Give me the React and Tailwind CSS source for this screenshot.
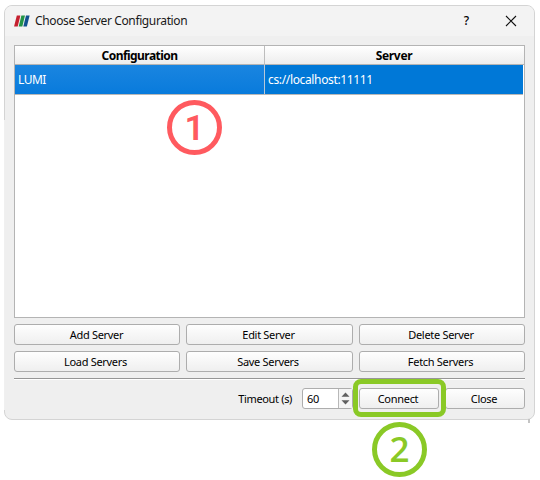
const BUTTON =
  "flex h-[21px] items-center justify-center rounded-[3px] border border-[#adadad] bg-linear-to-b from-[#fefefe] to-[#efefef] text-[11px] leading-none tracking-[-0.3px] text-black";

function Button({ children, className = "" }) {
  return <button className={`${BUTTON} ${className}`}>{children}</button>;
}

function Logo() {
  return (
    <svg className="h-[12px] w-[16px]" viewBox="0 0 16 12">
      <path d="M2.8 0.5h3.6L3.7 11.5H0.1z" fill="#c5202f" />
      <path d="M7.4 0.5h3.6L8.3 11.5H4.7z" fill="#239447" />
      <path d="M12 0.5h3.6L12.9 11.5H9.3z" fill="#12518f" />
    </svg>
  );
}

function TitleBar() {
  return (
    <header className="flex h-[30px] shrink-0 items-center bg-[#f3f3f3] pl-[9px] pr-[17px]">
      <Logo />
      <h1 className="ml-[5px] text-[12px] leading-none whitespace-nowrap tracking-[-0.37px] text-[#191919]">
        Choose Server Configuration
      </h1>
      <span className="ml-auto mr-[36px] text-[12px] leading-none font-medium text-black">?</span>
      <svg className="h-[12px] w-[12px]" viewBox="0 0 12 12" fill="none" stroke="#111" strokeWidth="1.1">
        <path d="M1 1L11 11M11 1L1 11" />
      </svg>
    </header>
  );
}

function ServerTable() {
  return (
    <div className="flex h-[273px] shrink-0 flex-col border border-[#b4b4b4] bg-white">
      <div className="grid h-[19px] grid-cols-[250px_1fr] border-b border-[#b4b4b4] bg-linear-to-b from-[#ffffff] to-[#ededed] text-center text-[12px] leading-[20px] font-bold text-black">
        <div className="border-r border-[#bdbdbd] tracking-[-0.55px]">Configuration</div>
        <div className="pr-[1px] tracking-[-0.3px]">Server</div>
      </div>
      <div className="mr-[1px] grid h-[30px] grid-cols-[250px_1fr] border-b border-[#b8b8b8] text-[12px] leading-[29px] text-white">
        <div className="border-r border-[#b8c8d8] bg-linear-to-b from-[#1985e0] to-[#087bdc] pl-[3px] tracking-[-0.5px]">LUMI</div>
        <div className="bg-[#0078d7] pl-[3px] tracking-[-0.35px]">cs://localhost:11111</div>
      </div>
    </div>
  );
}

function Timeout() {
  return (
    <div className="flex h-[21px] w-[51px] rounded-[3px] border border-[#adadad] bg-white text-[11px] leading-[19px] text-black">
      <span className="w-[35px] pl-[4px] tracking-[-0.2px]">60</span>
      <span className="flex flex-1 items-center justify-center border-l border-[#b8b8b8] bg-[#f5f5f5]">
        <svg className="h-[13px] w-[9px]" viewBox="0 0 9 13" fill="#606060">
          <path d="M4.5 0.5L8.5 4.7H0.5zM4.5 12.5L8.5 8.3H0.5z" />
        </svg>
      </span>
    </div>
  );
}

export default function App() {
  return (
    <div className="relative h-[480px] w-[540px] overflow-hidden bg-white pl-[4px] pt-[5px] font-['Noto_Sans',sans-serif]">
      <div className="flex h-[415px] w-[531px] flex-col overflow-hidden rounded-[8px] border border-[#d4d4d4] bg-[#efefef]">
        <TitleBar />
        <main className="flex flex-col px-[9px] pt-[9px]">
          <ServerTable />
          <div className="mt-[6px] grid grid-cols-[166px_167px_166px] gap-[6px]">
            <Button className="pr-[1px]">Add Server</Button>
            <Button className="pr-[2px]">Edit Server</Button>
            <Button className="pr-[2px]">Delete Server</Button>
            <Button className="pr-[3px]">Load Servers</Button>
            <Button className="pr-[3px]">Save Servers</Button>
            <Button className="pr-[3px]">Fetch Servers</Button>
          </div>
          <div className="mt-[6px] h-[2px] border-t border-[#969696] bg-white" />
          <div className="mt-[8px] flex items-center justify-end">
            <span className="mr-[10px] text-[11px] leading-none tracking-[-0.35px] text-black">Timeout (s)</span>
            <Timeout />
            <Button className="ml-[6px] w-[80px] pr-[2px]">Connect</Button>
            <Button className="ml-[6px] w-[80px] pr-[2px]">Close</Button>
          </div>
        </main>
      </div>

      <div className="absolute left-[4px] top-[120px] h-[290px] w-px bg-[#f0f0f0]" />
      <div className="absolute left-[528px] top-[419px] h-[4px] w-[2px] bg-[#c4c4c4]" />

      <div className="absolute left-[167px] top-[100px] flex h-[55px] w-[55px] items-center justify-center rounded-full border-5 border-[#ff5a5f] pt-[2px] font-['Roboto',sans-serif] text-[35px] leading-none font-semibold text-[#ff5a5f]">
        1
      </div>
      <div className="absolute left-[353px] top-[379px] h-[38px] w-[93px] rounded-[8px] border-5 border-[#8ac926]" />
      <div className="absolute left-[372px] top-[422px] flex h-[55px] w-[55px] items-center justify-center rounded-full border-5 border-[#8ac926] pb-[2px] font-['Open_Sans',sans-serif] text-[35px] leading-none font-semibold text-[#8ac926]">
        2
      </div>
    </div>
  );
}
